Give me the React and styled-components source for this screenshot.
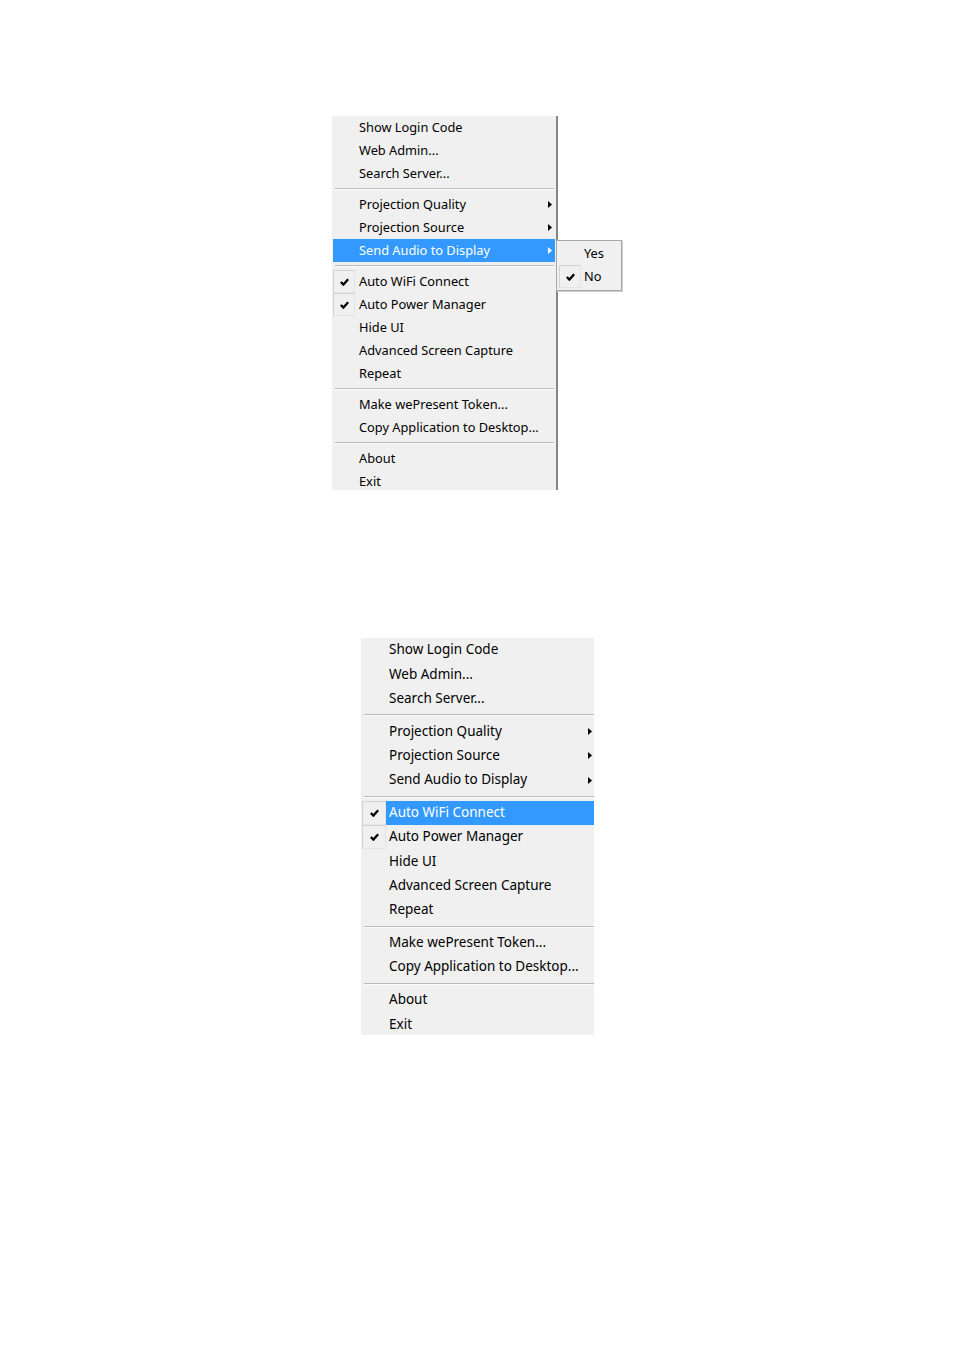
import React from "react";
import styled, { createGlobalStyle } from "styled-components";

const GlobalStyle = createGlobalStyle`
  body {
    margin: 0;
    background: #fff;
    font-family: "Noto Sans", "Open Sans", sans-serif;
  }
`;

/* page: two screenshots of the tray menu stacked */
const Page = styled.div`
  display: flex;
  flex-direction: column;
  align-items: flex-start;
  padding-top: 116px;
  min-height: 1350px;
  box-sizing: border-box;
`;

const MenuWrap = styled.div`
  position: relative;
  margin-left: ${(p) => p.$left}px;
  margin-top: ${(p) => p.$top || 0}px;
`;

const MenuBox = styled.div`
  width: ${(p) => p.$w}px;
  height: ${(p) => p.$h}px;
  overflow: hidden;
  background: #f0f0f0;
  border-right: ${(p) => (p.$border ? "2px solid #858585" : "none")};
  display: flex;
  flex-direction: column;
`;

const Row = styled.div`
  display: flex;
  align-items: center;
  flex: none;
  height: ${(p) => p.$h}px;
  margin: 0 ${(p) => p.$mr}px 0 1px;
  background: ${(p) => (p.$active ? "#3399ff" : "transparent")};
  color: ${(p) => (p.$active ? "#fff" : "#000")};
  font-size: ${(p) => p.$fs}px;
  white-space: nowrap;
`;

const CheckCell = styled.div`
  flex: none;
  width: ${(p) => p.$w}px;
  height: 100%;
  box-sizing: border-box;
  display: flex;
  align-items: center;
  justify-content: center;
  ${(p) =>
    p.$on &&
    `
    background: #f0f0f0;
    border: 1px solid #d2d2d2;
    border-right-color: #e4e4e4;
    border-bottom-color: #e4e4e4;
  `}
`;

const Label = styled.div`
  flex: 1;
  padding-left: ${(p) => p.$pl}px;
  line-height: 1;
`;

const ArrowCell = styled.div`
  flex: none;
  display: flex;
  align-items: center;
  padding-right: ${(p) => p.$pr}px;
`;

const Separator = styled.div`
  flex: none;
  height: ${(p) => p.$h}px;
  display: flex;
  align-items: center;
  margin: 0 ${(p) => p.$mr}px 0 3px;
  &::before {
    content: "";
    display: block;
    width: 100%;
    border-top: 1px solid #b9b9b9;
    border-bottom: 1px solid #fbfbfb;
  }
`;

/* flyout submenu that lies over the parent menu's edge */
const SubMenu = styled.div`
  position: absolute;
  left: 224px;
  top: 124px;
  width: 66px;
  box-sizing: border-box;
  padding: 1px 0 2px;
  background: #f0f0f0;
  border: 1px solid #a7a7a7;
  box-shadow: 1px 1px 0 #cfcfcf;
  display: flex;
  flex-direction: column;
`;

const Check = ({ color = "#000" }) => (
  <svg width="9" height="8" viewBox="0 0 9 8">
    <path d="M0.8 4 L3.4 6.6 L8.2 1.2" fill="none" stroke={color} strokeWidth="2.3" />
  </svg>
);

const Arrow = ({ color }) => (
  <svg width="4" height="7" viewBox="0 0 4 7">
    <polygon points="0,0 4,3.5 0,7" fill={color} />
  </svg>
);

const items = [
  { t: "Show Login Code" },
  { t: "Web Admin..." },
  { t: "Search Server..." },
  { sep: true },
  { t: "Projection Quality", sub: true },
  { t: "Projection Source", sub: true },
  { t: "Send Audio to Display", sub: true, key: "audio" },
  { sep: true },
  { t: "Auto WiFi Connect", checked: true, key: "wifi" },
  { t: "Auto Power Manager", checked: true },
  { t: "Hide UI" },
  { t: "Advanced Screen Capture" },
  { t: "Repeat" },
  { sep: true },
  { t: "Make wePresent Token..." },
  { t: "Copy Application to Desktop..." },
  { sep: true },
  { t: "About" },
  { t: "Exit" },
];

function TrayMenu({ cfg, active }) {
  return (
    <MenuBox $w={cfg.w} $h={cfg.h} $border={cfg.border}>
      {items.map((it, i) =>
        it.sep ? (
          <Separator key={i} $h={cfg.sep} $mr={cfg.sepMr} />
        ) : (
          <Row key={i} $h={cfg.row} $fs={cfg.fs} $mr={cfg.mr} $active={it.key === active}>
            <CheckCell $w={cfg.check} $on={it.checked}>
              {it.checked && <Check />}
            </CheckCell>
            <Label $pl={cfg.pl}>{it.t}</Label>
            {it.sub && (
              <ArrowCell $pr={cfg.pr}>
                <Arrow color={it.key === active ? "#fff" : "#000"} />
              </ArrowCell>
            )}
          </Row>
        )
      )}
    </MenuBox>
  );
}

const small = { w: 224, h: 374, border: true, row: 23, sep: 8, fs: 12.8, check: 22, pl: 4, pr: 3, mr: 1, sepMr: 2 };
const large = { w: 233, h: 397, border: false, row: 24.3, sep: 8.5, fs: 13.5, check: 24, pl: 3, pr: 2, mr: 0, sepMr: 0 };

export default function App() {
  return (
    <>
      <GlobalStyle />
      <Page>
        <MenuWrap $left={332}>
          <TrayMenu cfg={small} active="audio" />
          <SubMenu>
            <Row $h={23} $fs={12.8} $mr={0}>
              <CheckCell $w={22} style={{ marginLeft: 1 }} />
              <Label $pl={3}>Yes</Label>
            </Row>
            <Row $h={23} $fs={12.8} $mr={0}>
              <CheckCell $w={22} $on style={{ marginLeft: 1 }}>
                <Check />
              </CheckCell>
              <Label $pl={3}>No</Label>
            </Row>
          </SubMenu>
        </MenuWrap>
        <MenuWrap $left={361} $top={148}>
          <TrayMenu cfg={large} active="wifi" />
        </MenuWrap>
      </Page>
    </>
  );
}
